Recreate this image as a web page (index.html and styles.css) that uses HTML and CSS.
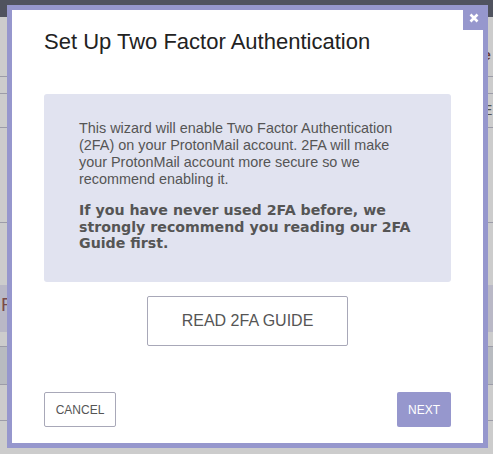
FILE: index.html
```html
<!DOCTYPE html>
<html>
<head>
<meta charset="utf-8">
<link rel="stylesheet" href="styles.css">
</head>
<body>
<div class="page">
  <div class="topbar"></div>
  <div class="row r1"><span class="peek-head">e</span></div>
  <div class="row r2"></div>
  <div class="row r3"><span class="peek-e">E</span></div>
  <div class="row r4"></div>
  <div class="row r5"></div>
  <div class="row band1"><span class="peek-f">F</span></div>
  <div class="row r6"></div>
  <div class="row band2"></div>
  <div class="row r7"></div>
</div>

<div class="modal">
  <button class="close" aria-label="Close">
    <svg width="10" height="10" viewBox="0 0 10 10"><path d="M1.5 1.5 L8.5 8.5 M8.5 1.5 L1.5 8.5" stroke="#fff" stroke-width="2.6" stroke-linecap="butt"/></svg>
  </button>
  <h1 class="title">Set Up Two Factor Authentication</h1>
  <div class="info">
    <p class="intro">This wizard will enable Two Factor Authentication (2FA) on your ProtonMail account. 2FA will make your ProtonMail account more secure so we recommend enabling it.</p>
    <p class="strong">If you have never used 2FA before, we strongly recommend you reading our 2FA Guide first.</p>
  </div>
  <div class="guide-wrap">
    <button class="guide">READ 2FA GUIDE</button>
  </div>
  <div class="footer">
    <button class="cancel">CANCEL</button>
    <button class="next">NEXT</button>
  </div>
</div>
</body>
</html>
```

FILE: styles.css
```css
html, body {
  margin: 0;
  padding: 0;
}
body {
  width: 493px;
  height: 454px;
  overflow: hidden;
  background: #cccccc;
  font-family: "Liberation Sans", Arial, sans-serif;
  position: relative;
}
.page {
  display: flex;
  flex-direction: column;
}
.topbar {
  height: 17px;
  background: #50535f;
}
.row {
  box-sizing: border-box;
  position: relative;
  border-bottom: 1px solid #9c9ca8;
}
.r1 { height: 60px; }
.r2 { height: 17px; }
.r3 { height: 34px; }
.r4 { height: 95px; }
.r5 { height: 62px; border-bottom: none; }
.band1 { height: 47px; background: #b9b8c6; border-bottom: none; }
.r6 { height: 15px; border-bottom: 1px solid #9c9ca8; }
.band2 { height: 38px; background: #b8bbc0; }
.r7 { height: 36px; }

.peek-head {
  position: absolute;
  left: 483px;
  top: 30px;
  font-weight: bold;
  font-size: 14px;
  color: #6b3b36;
}
.peek-e {
  position: absolute;
  left: 483px;
  top: 8px;
  font-size: 14px;
  color: #555;
}
.peek-f {
  position: absolute;
  left: 1px;
  top: 9px;
  font-size: 19px;
  color: #7a4a4a;
}

.modal {
  position: absolute;
  left: 7px;
  top: 5px;
  width: 481px;
  height: 443px;
  box-sizing: border-box;
  border: 5px solid #9697cd;
  background: #fff;
  padding: 0 32px 16px 32px;
  display: flex;
  flex-direction: column;
}
.close {
  position: absolute;
  top: 0;
  right: 0;
  width: 20px;
  height: 20px;
  border: none;
  padding: 0;
  margin: 0;
  background: #9697cd;
  display: flex;
  align-items: center;
  justify-content: center;
}
.close svg { display: block; margin: -4px -2px 0 0; }
.title {
  margin: 18px 0 0 0;
  font-size: 22px;
  font-weight: normal;
  line-height: 28px;
  color: #222;
}
.info {
  margin-top: 38px;
  height: 188px;
  box-sizing: border-box;
  background: #e1e3f0;
  border-radius: 3px;
  padding: 26px 37px 0 35px;
}
.intro {
  margin: 0;
  font-size: 14.4px;
  line-height: 17px;
  color: #555;
}
.strong {
  margin: 14px 0 0 0;
  font-family: "DejaVu Sans", sans-serif;
  font-weight: bold;
  font-size: 14.2px;
  line-height: 16.5px;
  color: #555;
}
.guide-wrap {
  display: flex;
  justify-content: center;
  margin-top: 14px;
}
.guide {
  width: 201px;
  height: 50px;
  background: #fff;
  border: 1px solid #a8a8b8;
  border-radius: 2px;
  font-family: "Liberation Sans", Arial, sans-serif;
  font-size: 16px;
  color: #555;
  padding: 0;
}
.footer {
  margin-top: auto;
  display: flex;
  justify-content: space-between;
  align-items: flex-end;
}
.cancel, .next {
  height: 35px;
  border-radius: 2px;
  font-family: "Liberation Sans", Arial, sans-serif;
  font-size: 12px;
  padding: 0;
}
.cancel {
  width: 72px;
  background: #fff;
  border: 1px solid #a8a8b8;
  color: #555;
}
.next {
  width: 54px;
  background: #9697cd;
  border: none;
  color: #fff;
}
```
